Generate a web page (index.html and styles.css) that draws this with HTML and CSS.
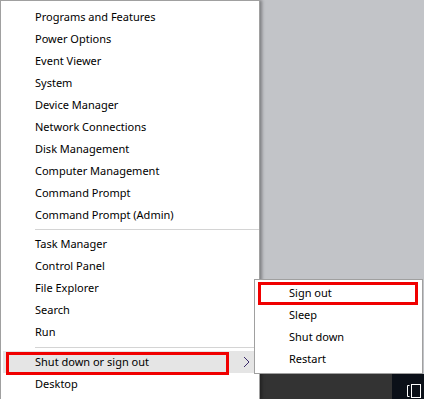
FILE: index.html
```html
<!DOCTYPE html>
<html lang="en">
<head>
  <meta charset="UTF-8" />
  <title>Quick Link Menu</title>
  <link rel="stylesheet" href="styles.css">
</head>
<body>

  <div class="desktop">
    <div class="menu">
      <div class="item">Programs and Features</div>
      <div class="item">Power Options</div>
      <div class="item">Event Viewer</div>
      <div class="item">System</div>
      <div class="item">Device Manager</div>
      <div class="item">Network Connections</div>
      <div class="item">Disk Management</div>
      <div class="item">Computer Management</div>
      <div class="item">Command Prompt</div>
      <div class="item">Command Prompt (Admin)</div>
      <div class="sep"></div>
      <div class="item">Task Manager</div>
      <div class="item">Control Panel</div>
      <div class="item">File Explorer</div>
      <div class="item">Search</div>
      <div class="item">Run</div>
      <div class="sep sep-low"></div>
      <div class="item item-open">
        Shut down or sign out
        <svg class="chevron" width="7" height="12" viewBox="0 0 7 12">
          <path d="M1 1 L6 6 L1 11" fill="none" stroke="#3a2a6a" stroke-width="1"/>
        </svg>
        <span class="mark mark-main"></span>
      </div>
      <div class="item">Desktop</div>
    </div>

    <div class="side">
      <div class="wall"></div>
      <div class="taskbar">
        <div class="notify">
          <svg width="16" height="14" viewBox="0 0 16 14">
            <path d="M3.5 1.5 H1.5 V12.5 H3.5" fill="none" stroke="#fff" stroke-width="1"/>
            <rect x="5.5" y="0.5" width="9" height="13" fill="none" stroke="#fff" stroke-width="1"/>
          </svg>
        </div>
      </div>
    </div>

    <div class="submenu">
      <div class="item sub-item">Sign out<span class="mark mark-sub"></span></div>
      <div class="item sub-item">Sleep</div>
      <div class="item sub-item">Shut down</div>
      <div class="item sub-item">Restart</div>
    </div>
  </div>

</body>
</html>
```

FILE: styles.css
```css
body {
  margin: 0;
  font-family: 'Noto Sans', 'Open Sans', sans-serif;
  font-size: 11px;
  color: #000;
  background-color: #c2c4c8;
  overflow: hidden;
}

.desktop {
  position: relative;
  display: flex;
  width: 424px;
  height: 399px;
}

.menu {
  width: 258px;
  height: 393px;
  padding-top: 5px;
  background-color: #fff;
  border: 1px solid #a0a0a0;
  border-bottom: none;
  box-shadow: 2px 0 3px rgba(0,0,0,0.35);
  position: relative;
  z-index: 1;
}

.item {
  position: relative;
  height: 22px;
  line-height: 22px;
  padding-left: 34px;
  white-space: nowrap;
}

.sep {
  height: 1px;
  margin: 3px 0 3px 34px;
  background-color: #d4d4d4;
}

.sep-low {
  margin-top: 4px;
  margin-bottom: 3px;
}

.item-open {
  background-color: #e5e5e5;
  margin-left: 2px;
  padding-left: 32px;
}

.chevron {
  position: absolute;
  left: 240px;
  top: 5px;
}

.mark {
  position: absolute;
  border: 3px solid #f00000;
}

.mark-main {
  left: 3px;
  top: 1px;
  width: 217px;
  height: 17px;
}

.side {
  flex: 1;
  display: flex;
  flex-direction: column;
}

.wall {
  flex: 1;
}

.taskbar {
  height: 25px;
  background-color: #333333;
  display: flex;
  justify-content: flex-end;
}

.notify {
  width: 32px;
  background-color: #0b1018;
  display: flex;
  align-items: flex-end;
  justify-content: flex-end;
  padding: 0 2px 1px 0;
  box-sizing: border-box;
}

.submenu {
  position: absolute;
  left: 254px;
  top: 279px;
  width: 167px;
  padding: 2px 0 3px;
  background-color: #fff;
  border: 1px solid #a0a0a0;
  z-index: 2;
}

.sub-item {
  padding-left: 34px;
}

.mark-sub {
  left: 3px;
  top: 0;
  width: 154px;
  height: 17px;
}
```
